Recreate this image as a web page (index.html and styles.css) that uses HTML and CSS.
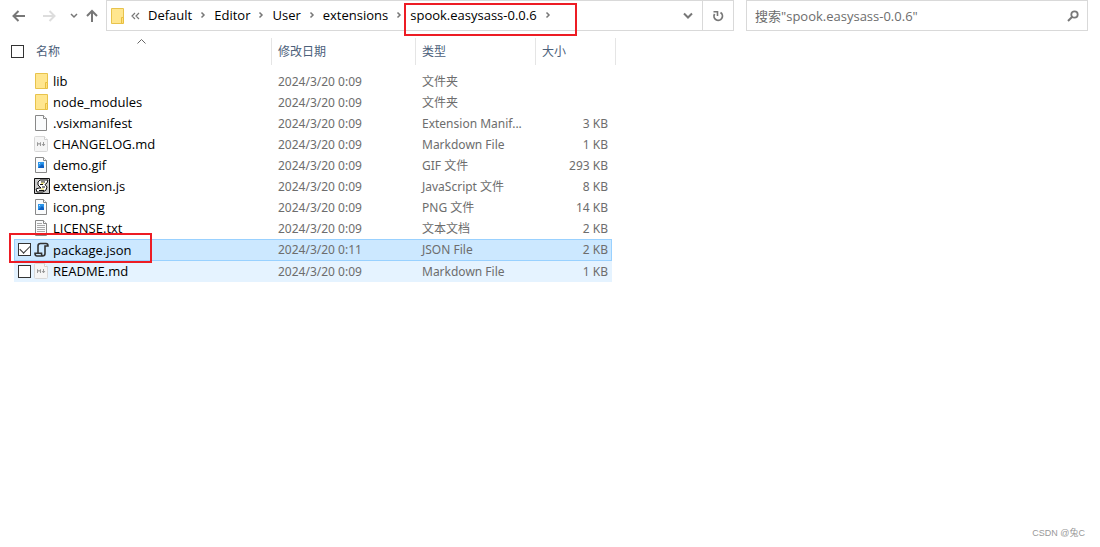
FILE: index.html
```html
<!DOCTYPE html>
<html lang="zh-CN">
<head>
<meta charset="utf-8">
<title>spook.easysass-0.0.6</title>
<link rel="stylesheet" href="styles.css">
</head>
<body>
<svg class="defs" width="0" height="0" aria-hidden="true">
  <symbol id="chev" viewBox="0 0 6 8"><path d="M1.5 1.5 4 4 1.5 6.5" fill="none" stroke="#777" stroke-width="1.5"/></symbol>
  <symbol id="folder" viewBox="0 0 16 16"><path d="M1.5.5h12v9h-1v6h-11z" fill="#ffe68f" stroke="#e8c34c"/><path d="M11.5 9.5h2v6h-2z" fill="#ffe07a" stroke="#e8bf41"/></symbol>
  <symbol id="page" viewBox="0 0 16 16"><path d="M1.5.5h8l3 3v12h-11z" fill="#fafbfc" stroke="#888"/><path d="M9.5.5v3h3" fill="#fff" stroke="#888"/></symbol>
  <symbol id="md" viewBox="0 0 16 16"><path d="M1.5.5h9l3 3v11q0 1-1 1h-11q-1 0-1-1v-13q0-1 1-1z" fill="#f5f5f5" stroke="#d8d8d8"/><path d="M10.5.5v3h3" fill="#fff" stroke="#d0d0d0"/><path d="M3.500 10V6.500l1.500 2 1.500-2V10M9.500 6v4M8 8l1.500 1.800L11 8" fill="none" stroke="#999"/></symbol>
  <symbol id="image" viewBox="0 0 16 16"><use href="#page" width="16" height="16"/><path d="M4 5h6v6H4z" fill="#2b95ea"/><path d="m4 11 4-4 2 2v2z" fill="#0f5fc0"/><path d="M5 6h1v1H5z" fill="#bdf"/></symbol>
  <symbol id="text" viewBox="0 0 16 16"><use href="#page" width="16" height="16"/><path d="M3 3.500h5M3 5.500h8M3 7.500h8M3 9.500h8M3 11.500h8M3 13.500h8" stroke="#aaa"/></symbol>
  <symbol id="js" viewBox="0 0 16 16"><path d="M.5.5h15v15H.5z" fill="#ccc" stroke="#111"/><path d="M6 2h8l-1 3-2 1.500 2 2.500-1 3-3 2H3l-1-3 3-1h2L4 7V4z" fill="#fff" stroke="#111"/><path d="M7 4h4M6 6.500h3M8 9h3M5 12.500h5" stroke="#111"/><path d="M7 5.200h3M7 11h3" stroke="#e5d64a"/></symbol>
  <symbol id="json" viewBox="0 0 16 16"><path d="M4 10.500V4q0-2.500 2.500-2.500h5.500q2 0 2 2.500h-3V11.500q0 2.500-2.500 2.500H3Q1 14 1 11.200h6.500q0 2.800 1.500 2.800" fill="none" stroke="#333" stroke-width="1.600"/></symbol>
</svg>
<header class="toolbar">
  <nav class="history">
    <button class="tool" aria-label="后退"><svg width="14" height="12"><path d="M13 6H1.500M6.500 1l-5 5 5 5" fill="none" stroke="#777" stroke-width="2"/></svg></button>
    <button class="tool forward" aria-label="前进"><svg width="14" height="12"><path d="M1 6h11.500M7.500 1l5 5-5 5" fill="none" stroke="#ddd" stroke-width="2"/></svg></button>
    <button class="tool recent" aria-label="最近"><svg width="8" height="6"><path d="m1 1 3 3 3-3" fill="none" stroke="#777" stroke-width="1.500"/></svg></button>
    <button class="tool" aria-label="向上"><svg width="12" height="13"><path d="M6 13V2M1 7l5-5 5 5" fill="none" stroke="#777" stroke-width="2"/></svg></button>
  </nav>
  <div class="address">
    <svg class="icon" width="16" height="16"><use href="#folder"/></svg>
    <svg class="more" width="9" height="8"><path d="M4 1 1 4l3 3M8 1 5 4l3 3" fill="none" stroke="#777" stroke-width="1.200"/></svg>
    <nav class="crumbs">
      <a href="#">Default</a><svg class="chev"><use href="#chev"/></svg>
      <a href="#">Editor</a><svg class="chev"><use href="#chev"/></svg>
      <a href="#">User</a><svg class="chev"><use href="#chev"/></svg>
      <a href="#">extensions</a><svg class="chev"><use href="#chev"/></svg>
      <span class="current"><a href="#">spook.easysass-0.0.6</a><svg class="chev"><use href="#chev"/></svg></span>
    </nav>
    <button class="tool drop" aria-label="历史记录"><svg width="10" height="8"><path d="m1 1.500 4 4 4-4" fill="none" stroke="#777" stroke-width="2"/></svg></button>
    <button class="tool refresh" aria-label="刷新"><svg width="12" height="12"><path d="M8.500 2.600A4.200 4.200 0 1 1 2.600 4" fill="none" stroke="#777" stroke-width="1.800"/><path d="M1.500 1.800H5.500V6" fill="none" stroke="#777" stroke-width="1.600"/></svg></button>
  </div>
  <label class="search">
    <input type="text" aria-label="搜索" placeholder='搜索"spook.easysass-0.0.6"'>
    <svg width="12" height="12"><circle cx="7.500" cy="4.500" r="3.200" fill="none" stroke="#777" stroke-width="1.800"/><path d="M5 7 1 11" stroke="#777" stroke-width="2"/></svg>
  </label>
</header>
<main>
<table class="files">
  <colgroup><col class="c-name"><col class="c-date"><col class="c-type"><col class="c-size"></colgroup>
  <thead><tr>
    <th><div class="head"><input type="checkbox" aria-label="全选"><span>名称</span><svg class="sort" width="9" height="5"><path d="m.5 4.500 4-4 4 4" fill="none" stroke="#666"/></svg></div></th>
    <th>修改日期</th><th>类型</th><th>大小</th>
  </tr></thead>
  <tbody>
    <tr><td><div class="name"><span class="tick"></span><svg class="icon"><use href="#folder"/></svg>lib</div></td><td>2024/3/20 0:09</td><td>文件夹</td><td></td></tr>
    <tr><td><div class="name"><span class="tick"></span><svg class="icon"><use href="#folder"/></svg>node_modules</div></td><td>2024/3/20 0:09</td><td>文件夹</td><td></td></tr>
    <tr><td><div class="name"><span class="tick"></span><svg class="icon"><use href="#page"/></svg>.vsixmanifest</div></td><td>2024/3/20 0:09</td><td>Extension Manif...</td><td>3 KB</td></tr>
    <tr><td><div class="name"><span class="tick"></span><svg class="icon"><use href="#md"/></svg>CHANGELOG.md</div></td><td>2024/3/20 0:09</td><td>Markdown File</td><td>1 KB</td></tr>
    <tr><td><div class="name"><span class="tick"></span><svg class="icon"><use href="#image"/></svg>demo.gif</div></td><td>2024/3/20 0:09</td><td>GIF 文件</td><td>293 KB</td></tr>
    <tr><td><div class="name"><span class="tick"></span><svg class="icon"><use href="#js"/></svg>extension.js</div></td><td>2024/3/20 0:09</td><td>JavaScript 文件</td><td>8 KB</td></tr>
    <tr><td><div class="name"><span class="tick"></span><svg class="icon"><use href="#image"/></svg>icon.png</div></td><td>2024/3/20 0:09</td><td>PNG 文件</td><td>14 KB</td></tr>
    <tr><td><div class="name"><span class="tick"></span><svg class="icon"><use href="#text"/></svg>LICENSE.txt</div></td><td>2024/3/20 0:09</td><td>文本文档</td><td>2 KB</td></tr>
    <tr class="selected"><td><div class="name"><span class="tick"><input type="checkbox" id="pkg" checked></span><svg class="icon"><use href="#json"/></svg><label for="pkg">package.json</label></div></td><td>2024/3/20 0:11</td><td>JSON File</td><td>2 KB</td></tr>
    <tr class="hovered"><td><div class="name"><span class="tick"><input type="checkbox" id="readme"></span><svg class="icon"><use href="#md"/></svg><label for="readme">README.md</label></div></td><td>2024/3/20 0:09</td><td>Markdown File</td><td>1 KB</td></tr>
  </tbody>
</table>
</main>
<footer class="credit">CSDN @兔C</footer>
</body>
</html>
```
FILE: styles.css
```css
*, *::before, *::after { box-sizing: border-box; }
body {
  margin: 0;
  min-height: 100vh;
  display: flex;
  flex-direction: column;
  background: #fff;
  color: #000;
  font: 12px/20px "Noto Sans", "Noto Sans CJK SC", sans-serif;
}
svg { display: block; flex: none; }
.defs { position: absolute; }
.toolbar { display: flex; gap: 12px; height: 31px; padding-right: 12px; }
.history { display: flex; align-items: center; padding-left: 12px; width: 94px; gap: 8px; }
.tool { display: flex; align-items: center; justify-content: center; border: 0; padding: 0; background: none; }
.forward { margin-left: 8px; }
.recent { margin-left: 6px; }
.address { flex: 1; display: flex; align-items: center; border: 1px solid #d9d9d9; padding-left: 3px; }
.icon { width: 16px; height: 16px; }
.more { margin-left: 5px; }
.crumbs { display: flex; align-items: center; flex: 1; margin-left: 8px; gap: 8px; font: 13px/18px "Open Sans", "Noto Sans CJK SC", sans-serif; padding-bottom: 1px; }
.crumbs a { color: #000; text-decoration: none; }
.chev { width: 6px; height: 8px; }
.current { position: relative; display: flex; align-items: center; gap: 8px; }
.current::after, .selected .name::after {
  content: "";
  position: absolute;
  border: 2px solid #ed1c24;
  pointer-events: none;
}
.current::after { inset: -3px -26px -12px -6px; }
.drop { width: 28px; }
.refresh { width: 31px; height: 29px; border-left: 1px solid #d9d9d9; }
.search { flex: 0 1 342px; display: flex; align-items: center; border: 1px solid #d9d9d9; padding: 0 8px; }
.search input { flex: 1; min-width: 0; border: 0; padding: 0; outline: 0; font: 13px/18px "Open Sans", "Noto Sans CJK SC", sans-serif; background: none; }
.search input::placeholder { color: #6d6d6d; opacity: 1; }
main { flex: 1; padding: 7px 11px; }
.files { table-layout: fixed; width: 605px; border-collapse: separate; border-spacing: 0; }
.c-name { width: 261px; }
.c-date { width: 144px; }
.c-type { width: 120px; }
.c-size { width: 80px; }
th { height: 27px; padding: 0 6px; text-align: left; font-weight: 400; color: #4c607a; border-right: 1px solid #e5e5e5; }
th:first-child { padding: 0; }
.head { position: relative; display: flex; align-items: center; gap: 12px; }
.sort { position: absolute; left: 126px; top: -3px; }
tbody::before { content: ""; display: block; height: 6px; }
td { height: 21px; padding: 0 6px; color: #6d6d6d; white-space: nowrap; background-clip: padding-box; }
td:first-child { padding: 0; border-left: 3px solid transparent; color: #000; }
td:last-child { padding: 0 4px; border-right: 4px solid transparent; text-align: right; }
.name { position: relative; display: flex; align-items: center; padding-bottom: 1px; font: 13px/20px "Open Sans", "Noto Sans CJK SC", sans-serif; }
.tick { width: 20px; padding-left: 4px; }
.name .icon { margin-right: 3px; }
input[type="checkbox"] { appearance: none; display: block; position: relative; width: 13px; height: 13px; margin: 0; border: 1px solid #333; background: #fff; }
input[type="checkbox"]:checked::after { content: ""; position: absolute; left: 1px; top: 1px; width: 10px; height: 6px; border: solid #333; border-width: 0 0 1px 1px; transform: rotate(-45deg); }
.selected td { height: 22px; background-color: #cce8ff; box-shadow: inset 0 1px #99d1ff, inset 0 -1px #99d1ff; }
.selected td:first-child { box-shadow: inset 1px 1px #99d1ff, inset 0 -1px #99d1ff; }
.selected td:last-child { box-shadow: inset -1px 1px #99d1ff, inset 0 -1px #99d1ff; }
.hovered td { background-color: #e5f3ff; }
.selected .name::after { left: -5px; top: -7px; width: 143px; height: 30px; }
.credit { padding: 0 15px 4px; text-align: right; color: #999; font: 9px/20px "Liberation Sans", "Noto Sans CJK SC", sans-serif; }
```
